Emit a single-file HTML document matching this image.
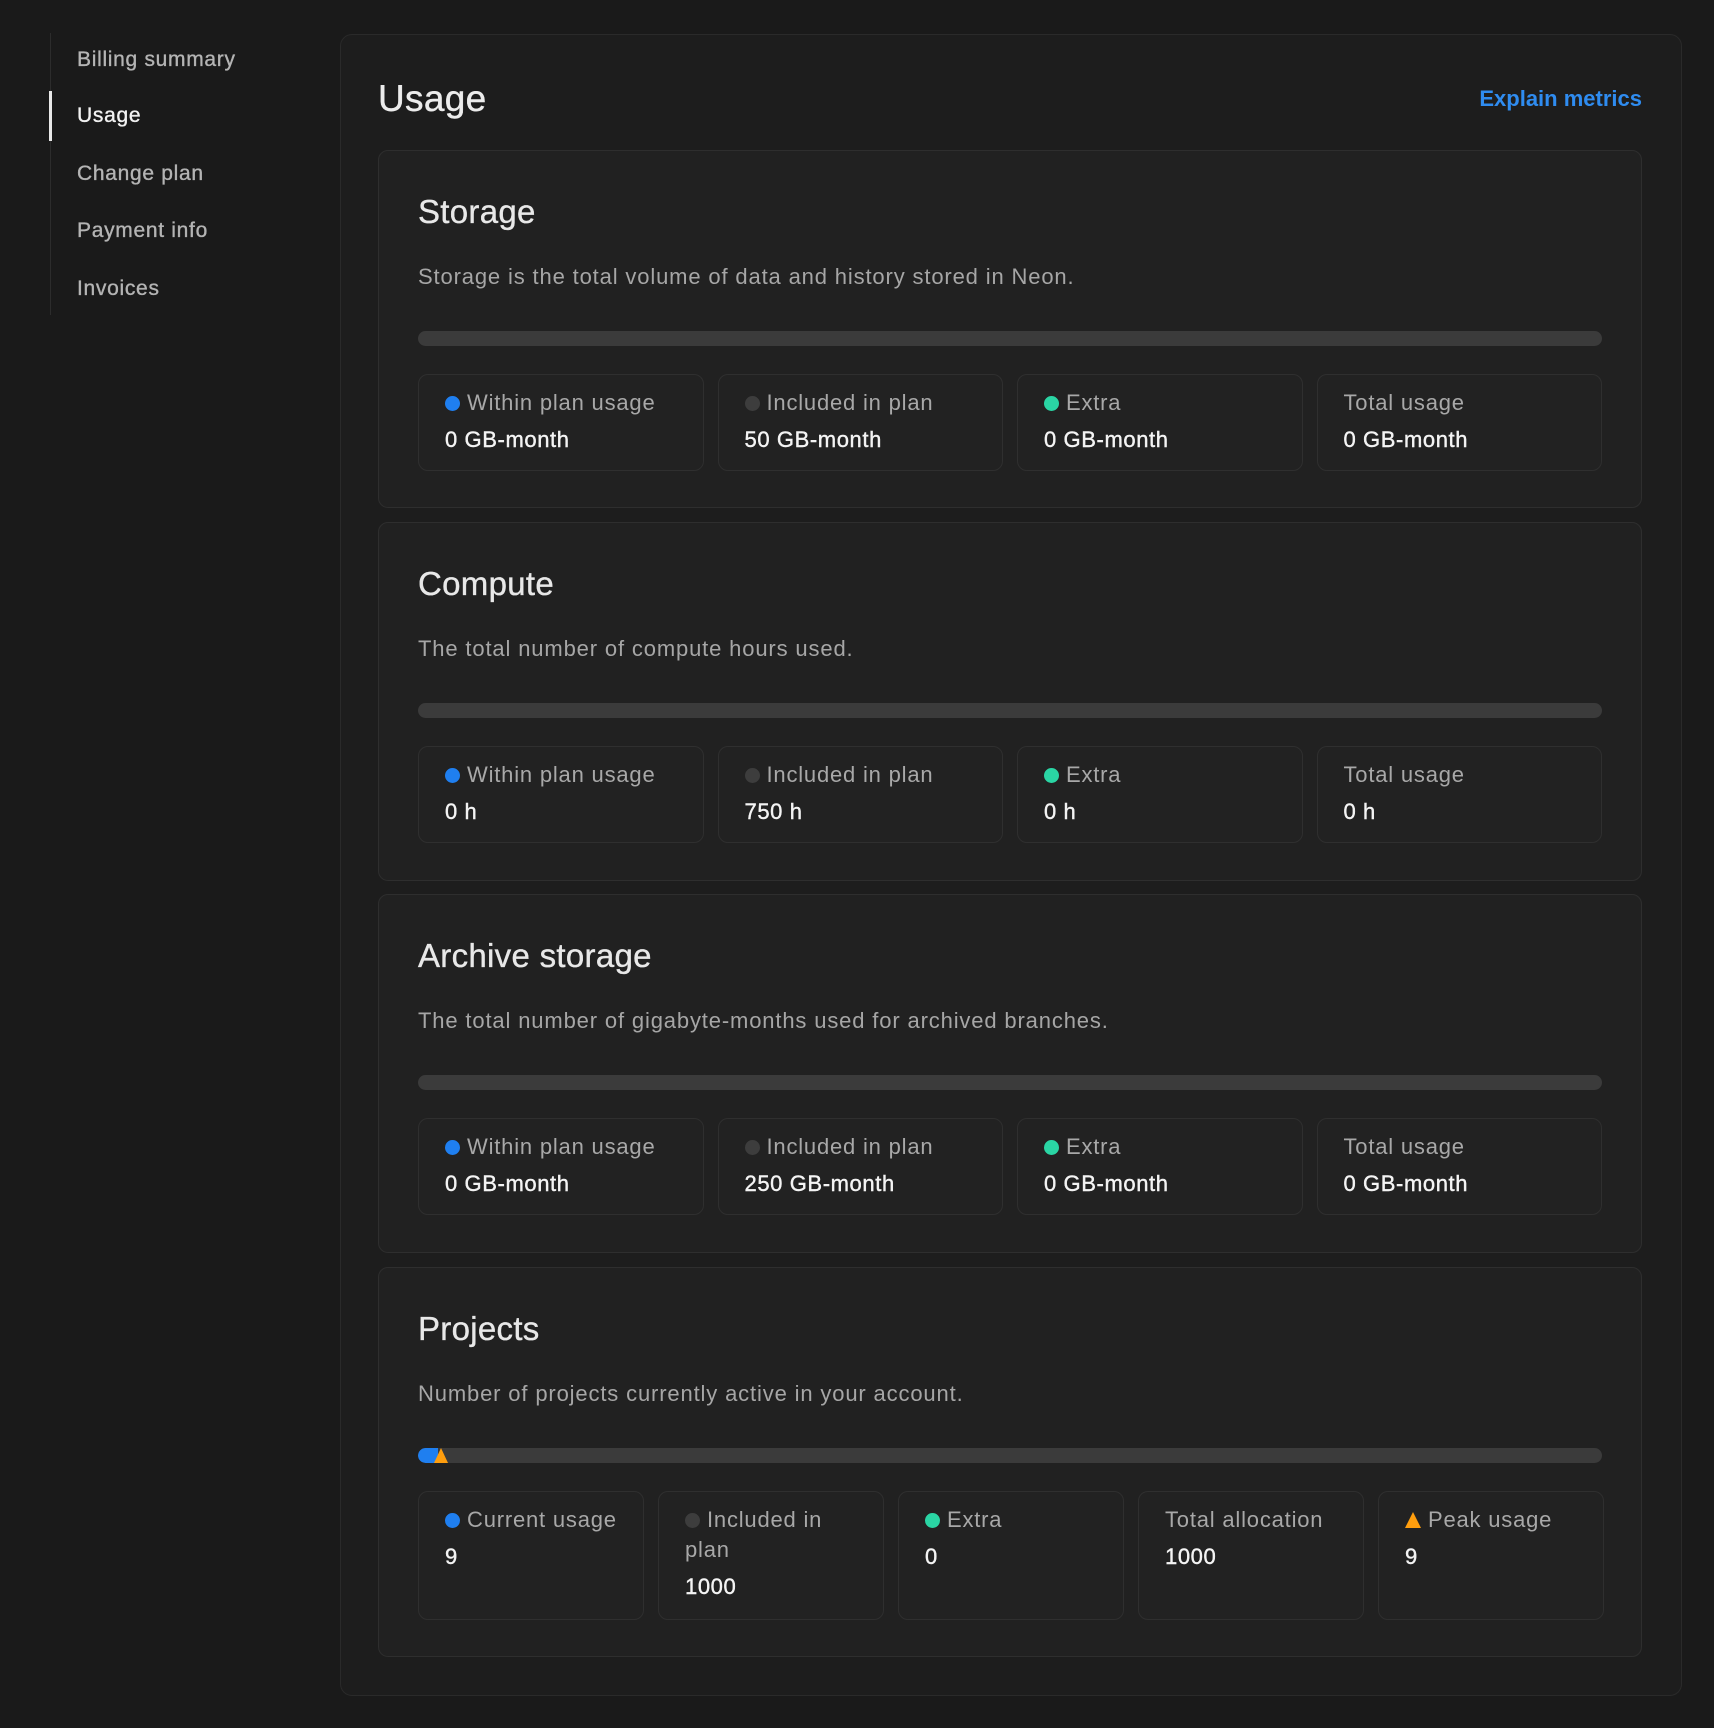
<!DOCTYPE html>
<html><head><meta charset="utf-8"><style>
*{box-sizing:border-box;margin:0;padding:0}
body{width:1714px;height:1728px;background:#1a1a1a;font-family:"Liberation Sans",sans-serif;position:relative;overflow:hidden;color:#e6e6e6}
.side{position:absolute;left:50px;top:33px;height:282px;border-left:1px solid #2c2c2c}
.side div{position:absolute;left:26px;font-size:21px;color:#b4b4b4;white-space:nowrap;transform:translateY(-50%);letter-spacing:0.7px;-webkit-text-stroke:0.35px #b4b4b4}
.side .act{color:#f2f2f2;-webkit-text-stroke:0.35px #f2f2f2}
.bar-act{position:absolute;left:-2px;top:58px;width:3px;height:50px;background:#e8e8e8}
.panel{position:absolute;left:340px;top:34px;width:1342px;height:1662px;border:1px solid #2a2a2a;border-radius:12px;background:#1d1d1d}
h1{position:absolute;left:378px;top:78px;font-size:37px;font-weight:500;color:#ececec;letter-spacing:0.3px;-webkit-text-stroke:0.4px #ececec}
.exp{position:absolute;right:72px;top:86px;font-size:22px;font-weight:700;color:#2f8cf0}
.card{position:absolute;left:378px;width:1264px;border:1px solid #2e2e2e;border-radius:10px;background:#212121}
.card h2{position:absolute;left:39px;top:42px;font-size:33px;font-weight:500;color:#e8e8e8;letter-spacing:0.3px;-webkit-text-stroke:0.35px #e8e8e8}
.card p{position:absolute;left:39px;top:113px;font-size:22px;color:#a6a6a6;letter-spacing:0.85px}
.track{position:absolute;left:39px;right:39px;top:180px;height:15px;border-radius:8px;background:#3b3b3b;overflow:hidden}
.stats{position:absolute;left:39px;right:39px;top:223px;display:flex;gap:14px}
.st{flex:1 1 0;min-width:0;height:97px;border:1px solid #2f2f2f;border-radius:10px;background:#222;padding:13px 10px 0 26px}
.p5 .st{flex:none;width:226px;height:129px}
.lb{font-size:22px;color:#a8a8a8;line-height:30px;letter-spacing:0.8px}
.vl{font-size:22px;color:#f4f4f4;margin-top:9px;letter-spacing:0.6px;-webkit-text-stroke:0.4px #f4f4f4}
.d{display:inline-block;width:15px;height:15px;border-radius:50%;margin-right:7px;vertical-align:-1px}
.b{background:#1f7ff0}.g{background:#3d3d3d}.e{background:#2ad5a4}
.tri{display:inline-block;width:0;height:0;border-left:8px solid transparent;border-right:8px solid transparent;border-bottom:16px solid #ff9e0e;margin-right:7px;vertical-align:-1px}
</style></head><body>
<div class="side">
<div style="top:27px">Billing summary</div>
<div class="act" style="top:83px">Usage</div>
<div style="top:141px">Change plan</div>
<div style="top:198px">Payment info</div>
<div style="top:256px">Invoices</div>
<span class="bar-act"></span>
</div>
<div class="panel"></div>
<h1>Usage</h1>
<div class="exp">Explain metrics</div>

<div class="card" style="top:150px;height:358px">
<h2>Storage</h2><p>Storage is the total volume of data and history stored in Neon.</p>
<div class="track"></div>
<div class="stats">
<div class="st"><div class="lb"><span class="d b"></span>Within plan usage</div><div class="vl">0 GB-month</div></div>
<div class="st"><div class="lb"><span class="d g"></span>Included in plan</div><div class="vl">50 GB-month</div></div>
<div class="st"><div class="lb"><span class="d e"></span>Extra</div><div class="vl">0 GB-month</div></div>
<div class="st"><div class="lb">Total usage</div><div class="vl">0 GB-month</div></div>
</div></div>

<div class="card" style="top:522px;height:359px">
<h2>Compute</h2><p>The total number of compute hours used.</p>
<div class="track"></div>
<div class="stats">
<div class="st"><div class="lb"><span class="d b"></span>Within plan usage</div><div class="vl">0 h</div></div>
<div class="st"><div class="lb"><span class="d g"></span>Included in plan</div><div class="vl">750 h</div></div>
<div class="st"><div class="lb"><span class="d e"></span>Extra</div><div class="vl">0 h</div></div>
<div class="st"><div class="lb">Total usage</div><div class="vl">0 h</div></div>
</div></div>

<div class="card" style="top:894px;height:359px">
<h2>Archive storage</h2><p>The total number of gigabyte-months used for archived branches.</p>
<div class="track"></div>
<div class="stats">
<div class="st"><div class="lb"><span class="d b"></span>Within plan usage</div><div class="vl">0 GB-month</div></div>
<div class="st"><div class="lb"><span class="d g"></span>Included in plan</div><div class="vl">250 GB-month</div></div>
<div class="st"><div class="lb"><span class="d e"></span>Extra</div><div class="vl">0 GB-month</div></div>
<div class="st"><div class="lb">Total usage</div><div class="vl">0 GB-month</div></div>
</div></div>

<div class="card" style="top:1267px;height:390px">
<h2>Projects</h2><p>Number of projects currently active in your account.</p>
<div class="track"><div style="position:absolute;left:0;top:0;width:20px;height:15px;background:#1f7ff0;border-radius:8px 0 0 8px"></div><div style="position:absolute;left:16px;top:0;width:0;height:0;border-left:7px solid transparent;border-right:7px solid transparent;border-bottom:15px solid #ff9e0e"></div></div>
<div class="stats p5">
<div class="st"><div class="lb" style="white-space:nowrap"><span class="d b"></span>Current usage</div><div class="vl">9</div></div>
<div class="st"><div class="lb"><span class="d g"></span>Included in plan</div><div class="vl">1000</div></div>
<div class="st"><div class="lb"><span class="d e"></span>Extra</div><div class="vl">0</div></div>
<div class="st"><div class="lb" style="white-space:nowrap">Total allocation</div><div class="vl">1000</div></div>
<div class="st"><div class="lb" style="white-space:nowrap"><span class="tri"></span>Peak usage</div><div class="vl">9</div></div>
</div></div>
</body></html>
